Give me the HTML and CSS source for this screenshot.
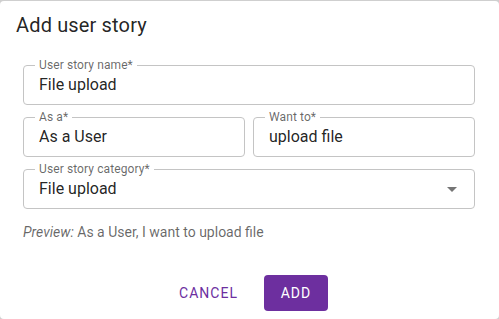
FILE: index.html
```html
<!DOCTYPE html>
<html lang="en">
<head>
<meta charset="utf-8">
<title>Add user story</title>
<link rel="stylesheet" href="styles.css">
</head>
<body>
<div class="dialog">
  <h2 class="title">Add user story</h2>
  <div class="form">
    <div class="field">
      <span class="label">User story name*</span>
      <span class="value">File upload</span>
    </div>
    <div class="row">
      <div class="field">
        <span class="label">As a*</span>
        <span class="value">As a User</span>
      </div>
      <div class="field">
        <span class="label">Want to*</span>
        <span class="value">upload file</span>
      </div>
    </div>
    <div class="field select">
      <span class="label">User story category*</span>
      <span class="value">File upload</span>
      <span class="arrow"></span>
    </div>
    <p class="preview"><em>Preview:</em> As a User, I want to upload file</p>
  </div>
  <div class="actions">
    <button class="btn btn-text">Cancel</button>
    <button class="btn btn-contained">Add</button>
  </div>
</div>
</body>
</html>
```

FILE: styles.css
```css
html, body {
  margin: 0;
  padding: 0;
}
body {
  width: 499px;
  height: 319px;
  overflow: hidden;
  background: #cfcfcf;
  font-family: Roboto, "Liberation Sans", sans-serif;
  color: rgba(0, 0, 0, 0.87);
}
.dialog {
  margin-top: 1px;
  height: 318px;
  background: #fff;
  border-radius: 4px;
  display: flex;
  flex-direction: column;
}
.title {
  margin: 0;
  padding: 8px 16px 0;
  font-size: 20px;
  line-height: 32px;
  font-weight: 400;
  letter-spacing: 0.15px;
}
.form {
  margin-top: 24px;
  padding: 0 24px 0 23px;
  display: flex;
  flex-direction: column;
  gap: 12px;
}
.row {
  display: flex;
  gap: 8px;
}
.row .field {
  flex: 1;
}
.field {
  position: relative;
  box-sizing: border-box;
  height: 40px;
  border: 1px solid #c4c4c4;
  border-radius: 4px;
  padding: 0 15px;
  display: flex;
  align-items: center;
}
.label {
  position: absolute;
  left: 11px;
  top: -8px;
  padding: 0 4px;
  background: #fff;
  font-size: 12px;
  line-height: 14px;
  color: rgba(0, 0, 0, 0.6);
  letter-spacing: 0.1px;
}
.value {
  font-size: 16px;
  line-height: 24px;
  flex: 1;
}
.select {
  padding-right: 17px;
}
.arrow {
  width: 0;
  height: 0;
  border-left: 5px solid transparent;
  border-right: 5px solid transparent;
  border-top: 5px solid #757575;
  margin-top: 1px;
}
.preview {
  margin: 1px 0 0;
  font-size: 14px;
  line-height: 20px;
  color: rgba(0, 0, 0, 0.6);
}
.actions {
  margin-top: 33px;
  display: flex;
  justify-content: center;
  gap: 18px;
}
.btn {
  font-family: Roboto, "Liberation Sans", sans-serif;
  font-size: 14px;
  font-weight: 400;
  line-height: 24px;
  letter-spacing: 1px;
  text-transform: uppercase;
  border: 0;
  border-radius: 4px;
  height: 36px;
  min-width: 64px;
  cursor: pointer;
}
.btn-text {
  background: transparent;
  color: #6d2f9f;
  padding: 6px 8px;
}
.btn-contained {
  background: #6d2f9f;
  color: #fff;
  padding: 6px 16px;
}
```
